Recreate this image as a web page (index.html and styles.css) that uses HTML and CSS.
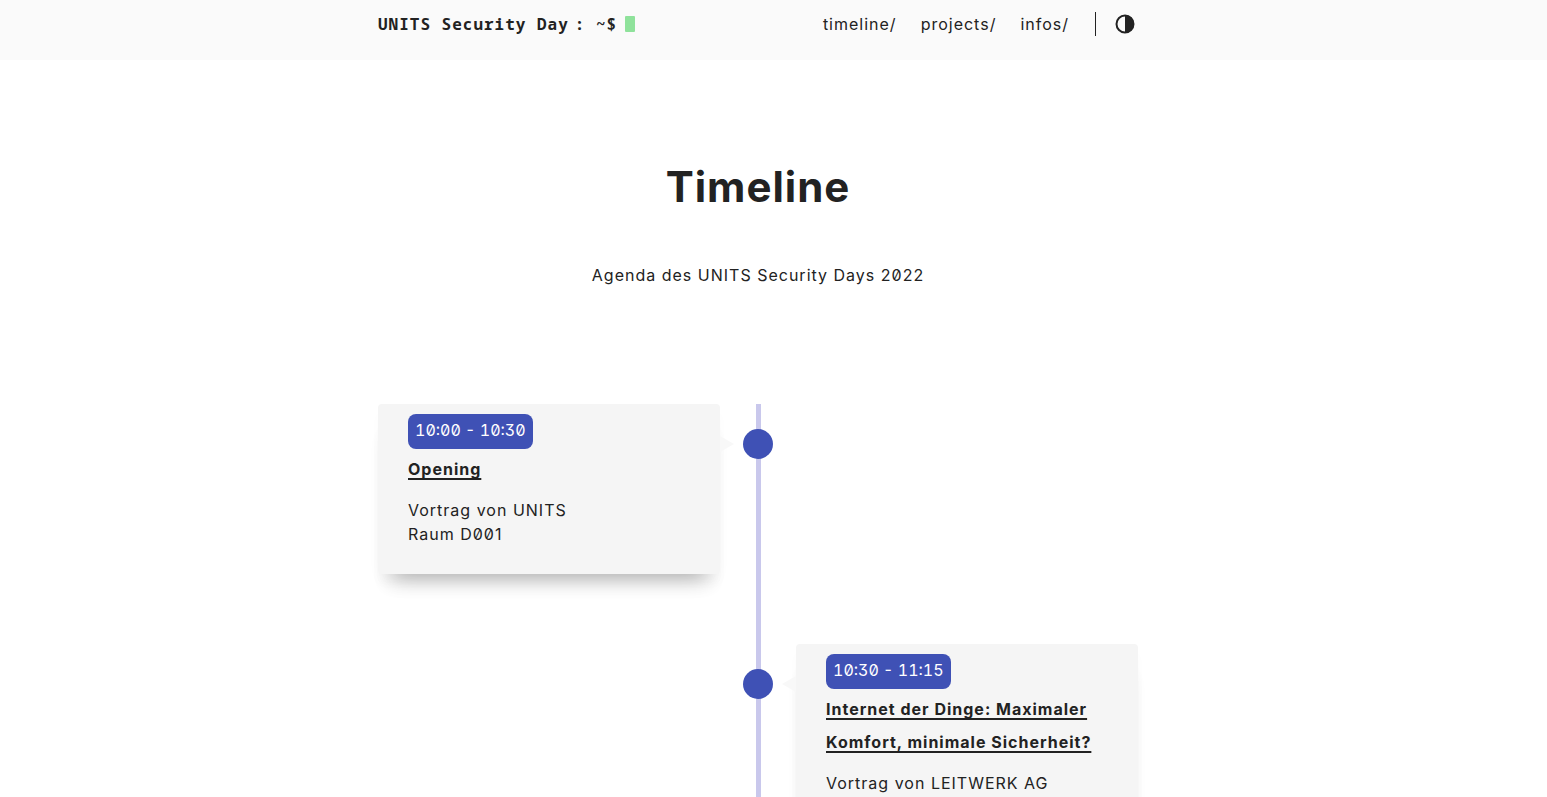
FILE: index.html
```html
<!DOCTYPE html>
<html lang="de">
<head>
    <meta charset="UTF-8">
    <meta name="viewport" content="width=device-width, initial-scale=1">
    <title>Timeline - UNITS Security Day</title>
    <link rel="stylesheet" href="styles.css">
</head>
<body>
    <header class="header">
        <div class="header-inner container">
            <a class="logo" href="/">
                <span>UNITS Security Day</span>
                <span class="logo-prompt">: ~$</span>
                <span class="logo-cursor"></span>
            </a>
            <nav class="menu">
                <a href="/timeline/">timeline/</a>
                <a href="/projects/">projects/</a>
                <a href="/infos/">infos/</a>
                <button class="theme-toggle" type="button" aria-label="Theme">
                    <svg width="24" height="24" viewBox="0 0 24 24" fill="none">
                        <circle cx="12" cy="12" r="8.5" stroke="currentColor" stroke-width="2"/>
                        <path d="M12 3a9 9 0 0 1 0 18z" fill="currentColor"/>
                    </svg>
                </button>
            </nav>
        </div>
    </header>

    <main class="container">
        <h1 class="page-title">Timeline</h1>
        <p class="page-intro">Agenda des UNITS Security Days 2022</p>

        <section class="timeline">
            <div class="timeline-item">
                <span class="timeline-dot"></span>
                <article class="card">
                    <span class="card-time">10:00 - 10:30</span>
                    <h2 class="card-title"><a href="#opening">Opening</a></h2>
                    <p>Vortrag von UNITS<br>Raum D001</p>
                </article>
            </div>
            <div class="timeline-item right">
                <span class="timeline-dot"></span>
                <article class="card">
                    <span class="card-time">10:30 - 11:15</span>
                    <h2 class="card-title"><a href="#iot">Internet der Dinge: Maximaler Komfort, minimale Sicherheit?</a></h2>
                    <p>Vortrag von LEITWERK AG</p>
                </article>
            </div>
        </section>
    </main>
</body>
</html>
```
FILE: styles.css
```css
* {
    box-sizing: border-box;
}
body {
    margin: 0;
    background: #fff;
    color: #222;
    font-family: Inter, "Liberation Sans", sans-serif;
    font-size: 16px;
    line-height: 24px;
    letter-spacing: 1px;
    font-feature-settings: "zero", "ss01";
}
a {
    color: inherit;
    text-decoration: none;
}
.header {
    background: #fafafa;
    padding: 12px 31px 24px 0;
}
.container {
    max-width: 760px;
    margin: 0 auto;
}
main.container {
    max-width: 791px;
    padding-right: 31px;
}
.header-inner {
    display: flex;
    justify-content: space-between;
    align-items: center;
}
.logo {
    display: flex;
    align-items: center;
    font-family: "Noto Sans Mono", "DejaVu Sans Mono", monospace;
    font-weight: bold;
}
.logo-prompt {
    margin-left: 6px;
}
.logo-cursor {
    width: 10px;
    height: 16px;
    margin-left: 8px;
    border-radius: 1px;
    background: #8fe29b;
}
.menu {
    display: flex;
    align-items: center;
    gap: 24px;
}
.theme-toggle {
    display: flex;
    margin-left: 2px;
    padding: 0 1px 0 17px;
    border: 0;
    border-left: 1px solid #222;
    background: none;
    color: inherit;
    cursor: pointer;
}
.page-title {
    margin: 0;
    padding-top: 99px;
    font-size: 42px;
    line-height: 56px;
    text-align: center;
}
.page-intro {
    margin: 48px 0 117px;
    text-align: center;
}

/* vertical line with cards on both sides */
.timeline {
    position: relative;
    display: flex;
    flex-direction: column;
    gap: 70px;
}
.timeline::before {
    content: "";
    position: absolute;
    top: 0;
    bottom: 0;
    left: calc(50% - 2px);
    width: 5px;
    background: #c9c8ec;
}
.timeline-item {
    display: grid;
    grid-template-columns: 45% 10% 45%;
}
.timeline-dot {
    grid-column: 2;
    grid-row: 1;
    position: relative;
    justify-self: center;
    width: 30px;
    height: 30px;
    margin-top: 25px;
    border-radius: 50%;
    background: #3f51b5;
}
.card {
    grid-column: 1;
    grid-row: 1;
    position: relative;
    padding: 10px 30px 28px;
    border-radius: 4px;
    background: #f5f5f5;
    box-shadow: 0 18px 20px -16px rgba(0, 0, 0, 0.3), 0 20px 16px -8px rgba(0, 0, 0, 0.06), 0 10px 10px rgba(0, 0, 0, 0.02);
}
.right .card {
    grid-column: 3;
}
.card::after {
    content: "";
    position: absolute;
    top: 32px;
    left: 100%;
    border: 8px solid transparent;
    border-left: 14px solid #f8f8f8;
    border-right: 0;
}
.right .card::after {
    left: auto;
    right: 100%;
    border-left: 0;
    border-right: 14px solid #f8f8f8;
}
.card-time {
    display: inline-block;
    padding: 4px 7px 7px;
    border-radius: 8px;
    background: #3f51b5;
    color: #fff;
    letter-spacing: normal;
    font-feature-settings: "tnum", "zero", "ss01";
}
.card-title {
    margin: 4px 0 12px;
    font-size: 16px;
    line-height: 33px;
}
.card-title a {
    text-decoration: underline;
    text-decoration-thickness: 2px;
    text-underline-offset: 3px;
}
.card p {
    margin: 0;
}
```
